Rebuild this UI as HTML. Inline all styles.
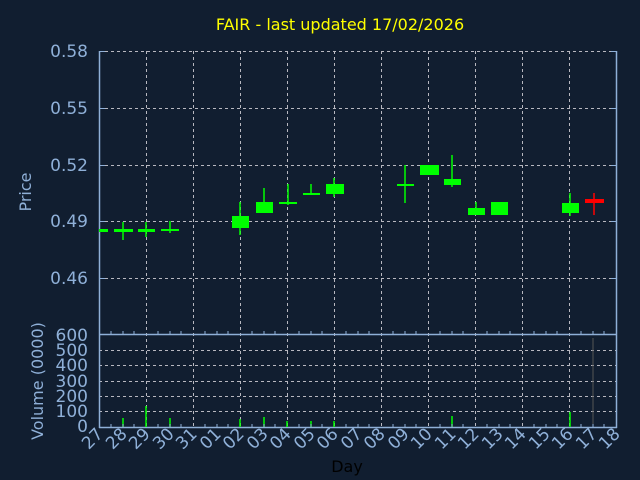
<!DOCTYPE html>
<html><head><style>
html,body{margin:0;padding:0;background:#111e30;}
svg{display:block;font-family:"DejaVu Sans","Liberation Sans",sans-serif;}
</style></head><body>
<svg width="640" height="480" viewBox="0 0 640 480" xmlns="http://www.w3.org/2000/svg">
<rect width="640" height="480" fill="#111e30"/>
<text x="340" y="30" fill="#ffff00" font-size="16" text-anchor="middle">FAIR - last updated 17/02/2026</text>
<g stroke="#b8b8c0" stroke-dasharray="3,3" stroke-width="1">
<line x1="99" y1="51.5" x2="617" y2="51.5"/>
<line x1="99" y1="108.5" x2="617" y2="108.5"/>
<line x1="99" y1="165.5" x2="617" y2="165.5"/>
<line x1="99" y1="221.5" x2="617" y2="221.5"/>
<line x1="99" y1="278.5" x2="617" y2="278.5"/>
<line x1="99" y1="350.5" x2="617" y2="350.5"/>
<line x1="99" y1="365.5" x2="617" y2="365.5"/>
<line x1="99" y1="381.5" x2="617" y2="381.5"/>
<line x1="99" y1="396.5" x2="617" y2="396.5"/>
<line x1="99" y1="411.5" x2="617" y2="411.5"/>
<line x1="146.5" y1="51" x2="146.5" y2="427"/>
<line x1="193.5" y1="51" x2="193.5" y2="427"/>
<line x1="240.5" y1="51" x2="240.5" y2="427"/>
<line x1="287.5" y1="51" x2="287.5" y2="427"/>
<line x1="334.5" y1="51" x2="334.5" y2="427"/>
<line x1="381.5" y1="51" x2="381.5" y2="427"/>
<line x1="428.5" y1="51" x2="428.5" y2="427"/>
<line x1="475.5" y1="51" x2="475.5" y2="427"/>
<line x1="522.5" y1="51" x2="522.5" y2="427"/>
<line x1="569.5" y1="51" x2="569.5" y2="427"/>
</g>
<g stroke="#8fb0d8" stroke-width="1.5">
<line x1="99.5" y1="51" x2="99.5" y2="428"/>
<line x1="616.5" y1="51" x2="616.5" y2="428"/>
<line x1="99" y1="334.5" x2="617" y2="334.5"/>
<line x1="99" y1="427.5" x2="617" y2="427.5"/>
</g>
<g fill="#8fb0d8" font-size="17" text-anchor="end">
<text x="88" y="57">0.58</text>
<text x="88" y="114">0.55</text>
<text x="88" y="171">0.52</text>
<text x="88" y="227">0.49</text>
<text x="88" y="284">0.46</text>
<text x="88" y="341">600</text>
<text x="88" y="356">500</text>
<text x="88" y="371">400</text>
<text x="88" y="387">300</text>
<text x="88" y="402">200</text>
<text x="88" y="417">100</text>
<text x="88" y="432">0</text>
</g>
<text transform="translate(31,192) rotate(-90)" fill="#8fb0d8" font-size="16" text-anchor="middle">Price</text>
<text transform="translate(43,381) rotate(-90)" fill="#8fb0d8" font-size="16" text-anchor="middle">Volume (0000)</text>
<text x="347" y="472" fill="#000" font-size="16" text-anchor="middle">Day</text>
<g fill="#8fb0d8" font-size="17" text-anchor="end">
<text transform="translate(104,435) rotate(-45)">27</text>
<text transform="translate(128,435) rotate(-45)">28</text>
<text transform="translate(151,435) rotate(-45)">29</text>
<text transform="translate(175,435) rotate(-45)">30</text>
<text transform="translate(198,435) rotate(-45)">31</text>
<text transform="translate(222,435) rotate(-45)">01</text>
<text transform="translate(245,435) rotate(-45)">02</text>
<text transform="translate(269,435) rotate(-45)">03</text>
<text transform="translate(292,435) rotate(-45)">04</text>
<text transform="translate(316,435) rotate(-45)">05</text>
<text transform="translate(339,435) rotate(-45)">06</text>
<text transform="translate(363,435) rotate(-45)">07</text>
<text transform="translate(386,435) rotate(-45)">08</text>
<text transform="translate(410,435) rotate(-45)">09</text>
<text transform="translate(433,435) rotate(-45)">10</text>
<text transform="translate(457,435) rotate(-45)">11</text>
<text transform="translate(480,435) rotate(-45)">12</text>
<text transform="translate(504,435) rotate(-45)">13</text>
<text transform="translate(527,435) rotate(-45)">14</text>
<text transform="translate(551,435) rotate(-45)">15</text>
<text transform="translate(574,435) rotate(-45)">16</text>
<text transform="translate(598,435) rotate(-45)">17</text>
<text transform="translate(621,435) rotate(-45)">18</text>
</g>
<g stroke="#00ff00" stroke-width="1.5">
<line x1="123" y1="222" x2="123" y2="240"/>
<line x1="146" y1="222" x2="146" y2="237"/>
<line x1="170" y1="221" x2="170" y2="233"/>
<line x1="240" y1="202" x2="240" y2="235"/>
<line x1="264" y1="188" x2="264" y2="212"/>
<line x1="288" y1="184" x2="288" y2="205"/>
<line x1="311" y1="184" x2="311" y2="195"/>
<line x1="334" y1="178" x2="334" y2="197"/>
<line x1="405" y1="165" x2="405" y2="203"/>
<line x1="452" y1="155" x2="452" y2="187"/>
<line x1="476" y1="202" x2="476" y2="215"/>
<line x1="570" y1="193" x2="570" y2="216"/>
</g>
<g fill="#00ff00">
<rect x="99" y="229" width="9" height="3"/>
<rect x="114" y="229" width="19" height="3"/>
<rect x="138" y="229" width="17" height="3"/>
<rect x="161" y="229" width="18" height="2"/>
<rect x="232" y="216" width="17" height="12"/>
<rect x="256" y="202" width="17" height="11"/>
<rect x="279" y="202" width="18" height="2"/>
<rect x="303" y="193" width="17" height="2"/>
<rect x="326" y="184" width="18" height="10"/>
<rect x="397" y="184" width="17" height="2"/>
<rect x="420" y="165" width="19" height="10"/>
<rect x="444" y="179" width="17" height="6"/>
<rect x="468" y="208" width="17" height="7"/>
<rect x="491" y="202" width="17" height="13"/>
<rect x="562" y="203" width="17" height="10"/>
</g>
<line x1="594" y1="193" x2="594" y2="215" stroke="#ff0000" stroke-width="1.5"/>
<rect x="585" y="199" width="19" height="4" fill="#ff0000"/>
<g stroke="#00ff00" stroke-width="1.5">
<line x1="123" y1="427" x2="123" y2="418"/>
<line x1="146" y1="427" x2="146" y2="406"/>
<line x1="170" y1="427" x2="170" y2="418"/>
<line x1="240" y1="427" x2="240" y2="419"/>
<line x1="264" y1="427" x2="264" y2="417"/>
<line x1="287" y1="427" x2="287" y2="421"/>
<line x1="311" y1="427" x2="311" y2="421"/>
<line x1="334" y1="427" x2="334" y2="421"/>
<line x1="452" y1="427" x2="452" y2="416"/>
<line x1="570" y1="427" x2="570" y2="412"/>
</g>
<line x1="593" y1="427" x2="593" y2="338" stroke="#555" stroke-width="1"/>
<g stroke="#8fb0d8" stroke-width="1">
<path d="M111 334v-3M123 334v-3M134 334v-3M158 334v-3M170 334v-3M181 334v-3M205 334v-3M217 334v-3M228 334v-3M252 334v-3M264 334v-3M275 334v-3M299 334v-3M311 334v-3M322 334v-3M346 334v-3M358 334v-3M369 334v-3M393 334v-3M405 334v-3M416 334v-3M440 334v-3M452 334v-3M463 334v-3M487 334v-3M499 334v-3M510 334v-3M534 334v-3M546 334v-3M557 334v-3M581 334v-3M593 334v-3M604 334v-3"/>
<path d="M111 427v-3M123 427v-3M134 427v-3M158 427v-3M170 427v-3M181 427v-3M205 427v-3M217 427v-3M228 427v-3M252 427v-3M264 427v-3M275 427v-3M299 427v-3M311 427v-3M322 427v-3M346 427v-3M358 427v-3M369 427v-3M393 427v-3M405 427v-3M416 427v-3M440 427v-3M452 427v-3M463 427v-3M487 427v-3M499 427v-3M510 427v-3M534 427v-3M546 427v-3M557 427v-3M581 427v-3M593 427v-3M604 427v-3"/>
<path d="M99 51.5h6M99 108.5h6M99 165.5h6M99 221.5h6M99 278.5h6M611 51.5h6M611 108.5h6M611 165.5h6M611 221.5h6M611 278.5h6"/>
</g>
</svg>
</body></html>
